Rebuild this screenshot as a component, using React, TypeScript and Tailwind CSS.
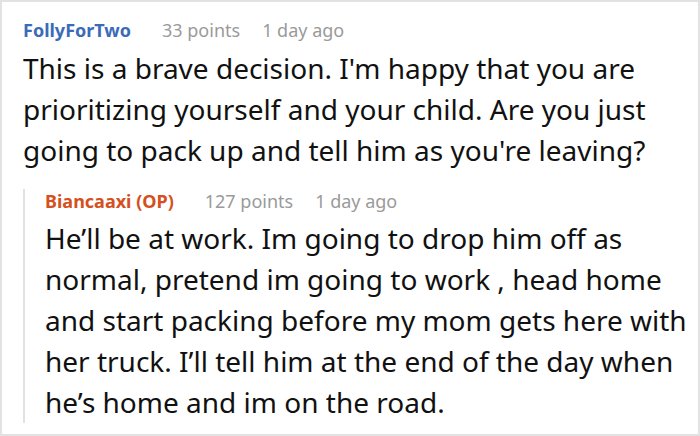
const parentLines = [
  "This is a brave decision. I'm happy that you are",
  "prioritizing yourself and your child. Are you just",
  "going to pack up and tell him as you're leaving?",
];

const replyLines = [
  "He’ll be at work. Im going to drop him off as",
  "normal, pretend im going to work , head home",
  "and start packing before my mom gets here with",
  "her truck. I’ll tell him at the end of the day when",
  "he’s home and im on the road.",
];

function CommentHeader({ name, color, points }: { name: string; color: string; points: string }) {
  return (
    <div className="flex items-baseline text-[18px] leading-[24px]">
      <span className={`font-bold ${color}`}>{name}</span>
      <span className="ml-[31px] text-[#9a9a9a]">{points}</span>
      <span className="ml-[22px] text-[#9a9a9a]">1 day ago</span>
    </div>
  );
}

export default function App() {
  return (
    <div
      className="h-[436px] w-[700px] overflow-hidden border-2 border-[#e2e2e2] bg-white pl-[21px] text-[#111]"
      style={{ fontFamily: '"Noto Sans", sans-serif' }}
    >
      {/* Parent comment */}
      <div className="pt-[16px]">
        <CommentHeader name="FollyForTwo" color="text-[#3b6bb8]" points="33 points" />
        <p className="mt-[6px] text-[28px] leading-[41px]">
          {parentLines.map((line) => (
            <span key={line} className="block whitespace-nowrap">
              {line}
            </span>
          ))}
        </p>
      </div>

      {/* Reply */}
      <div className="mt-[18px] border-l-2 border-[#e2e2e2] pl-[20px]">
        <CommentHeader name="Biancaaxi (OP)" color="text-[#d4501e]" points="127 points" />
        <p className="mt-[5px] text-[28px] leading-[41px]">
          {replyLines.map((line) => (
            <span key={line} className="block whitespace-nowrap">
              {line}
            </span>
          ))}
        </p>
      </div>
    </div>
  );
}
